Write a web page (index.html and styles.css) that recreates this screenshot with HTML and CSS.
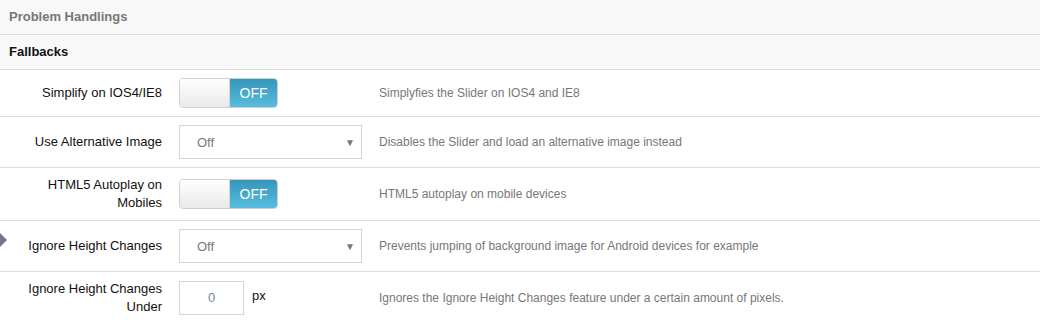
FILE: index.html
```html
<!DOCTYPE html>
<html>
<head>
<meta charset="utf-8">
<link rel="stylesheet" href="styles.css">
</head>
<body>
<div class="panel">
  <div class="head head-main">Problem Handlings</div>
  <div class="head head-sub">Fallbacks</div>

  <div class="row">
    <div class="label">Simplify on IOS4/IE8</div>
    <div class="control">
      <div class="toggle"><span class="t-off-side"></span><span class="t-on-side">OFF</span></div>
    </div>
    <div class="desc">Simplyfies the Slider on IOS4 and IE8</div>
  </div>

  <div class="row">
    <div class="label">Use Alternative Image</div>
    <div class="control">
      <div class="select"><span>Off</span><span class="caret">&#9660;</span></div>
    </div>
    <div class="desc">Disables the Slider and load an alternative image instead</div>
  </div>

  <div class="row">
    <div class="label">HTML5 Autoplay on Mobiles</div>
    <div class="control">
      <div class="toggle"><span class="t-off-side"></span><span class="t-on-side">OFF</span></div>
    </div>
    <div class="desc">HTML5 autoplay on mobile devices</div>
  </div>

  <div class="row row-marked">
    <span class="marker"></span>
    <div class="label">Ignore Height Changes</div>
    <div class="control">
      <div class="select"><span>Off</span><span class="caret">&#9660;</span></div>
    </div>
    <div class="desc">Prevents jumping of background image for Android devices for example</div>
  </div>

  <div class="row">
    <div class="label">Ignore Height Changes Under</div>
    <div class="control control-inline">
      <div class="num">0</div><span class="unit">px</span>
    </div>
    <div class="desc">Ignores the Ignore Height Changes feature under a certain amount of pixels.</div>
  </div>
</div>
</body>
</html>
```

FILE: styles.css
```css
* { box-sizing: border-box; }
html, body { margin: 0; padding: 0; background: #fff; }
body {
  font-family: "Liberation Sans", Arial, sans-serif;
  font-size: 13px;
  color: #222;
  width: 1040px;
  height: 324px;
  overflow: hidden;
}
.head {
  height: 35px;
  background: #f8f8f8;
  border-bottom: 1px solid #dcdcdc;
  padding-left: 9px;
  font-weight: bold;
  line-height: 34px;
}
.head-main { color: #777; }
.head-sub { color: #111; }

.row {
  position: relative;
  display: flex;
  align-items: center;
  padding: 8px 0;
  border-bottom: 1px solid #dcdcdc;
}
.label {
  width: 162px;
  padding-left: 20px;
  text-align: right;
  line-height: 18px;
  color: #111;
}
.control {
  margin-left: 17px;
  width: 200px;
  flex: none;
}
.control-inline {
  display: flex;
  align-items: center;
}
.desc {
  font-size: 12px;
  color: #777;
}

.toggle {
  display: flex;
  width: 99px;
  height: 30px;
  border: 1px solid #d0d0d0;
  border-radius: 4px;
  overflow: hidden;
}
.t-off-side {
  width: 50px;
  background: linear-gradient(#ffffff, #e9e9e9);
  border-right: 1px solid #d8d8d8;
}
.t-on-side {
  flex: 1;
  background: linear-gradient(#3596ba, #57bddf);
  color: #fff;
  font-size: 14px;
  text-align: center;
  line-height: 28px;
}

.select {
  display: flex;
  justify-content: space-between;
  align-items: center;
  width: 183px;
  height: 34px;
  border: 1px solid #d4d4d4;
  padding: 0 6px 0 17px;
  color: #777;
  font-size: 13px;
}
.caret {
  font-size: 10px;
  color: #777;
}

.num {
  width: 65px;
  height: 34px;
  border: 1px solid #d4d4d4;
  text-align: center;
  line-height: 32px;
  color: #6f87a5;
  font-size: 13px;
}
.unit {
  margin-left: 8px;
  color: #111;
  margin-top: -6px;
}

.marker {
  position: absolute;
  left: 0;
  top: 12px;
  width: 0;
  height: 0;
  border-left: 7px solid #6b7889;
  border-top: 7px solid transparent;
  border-bottom: 7px solid transparent;
}
```
